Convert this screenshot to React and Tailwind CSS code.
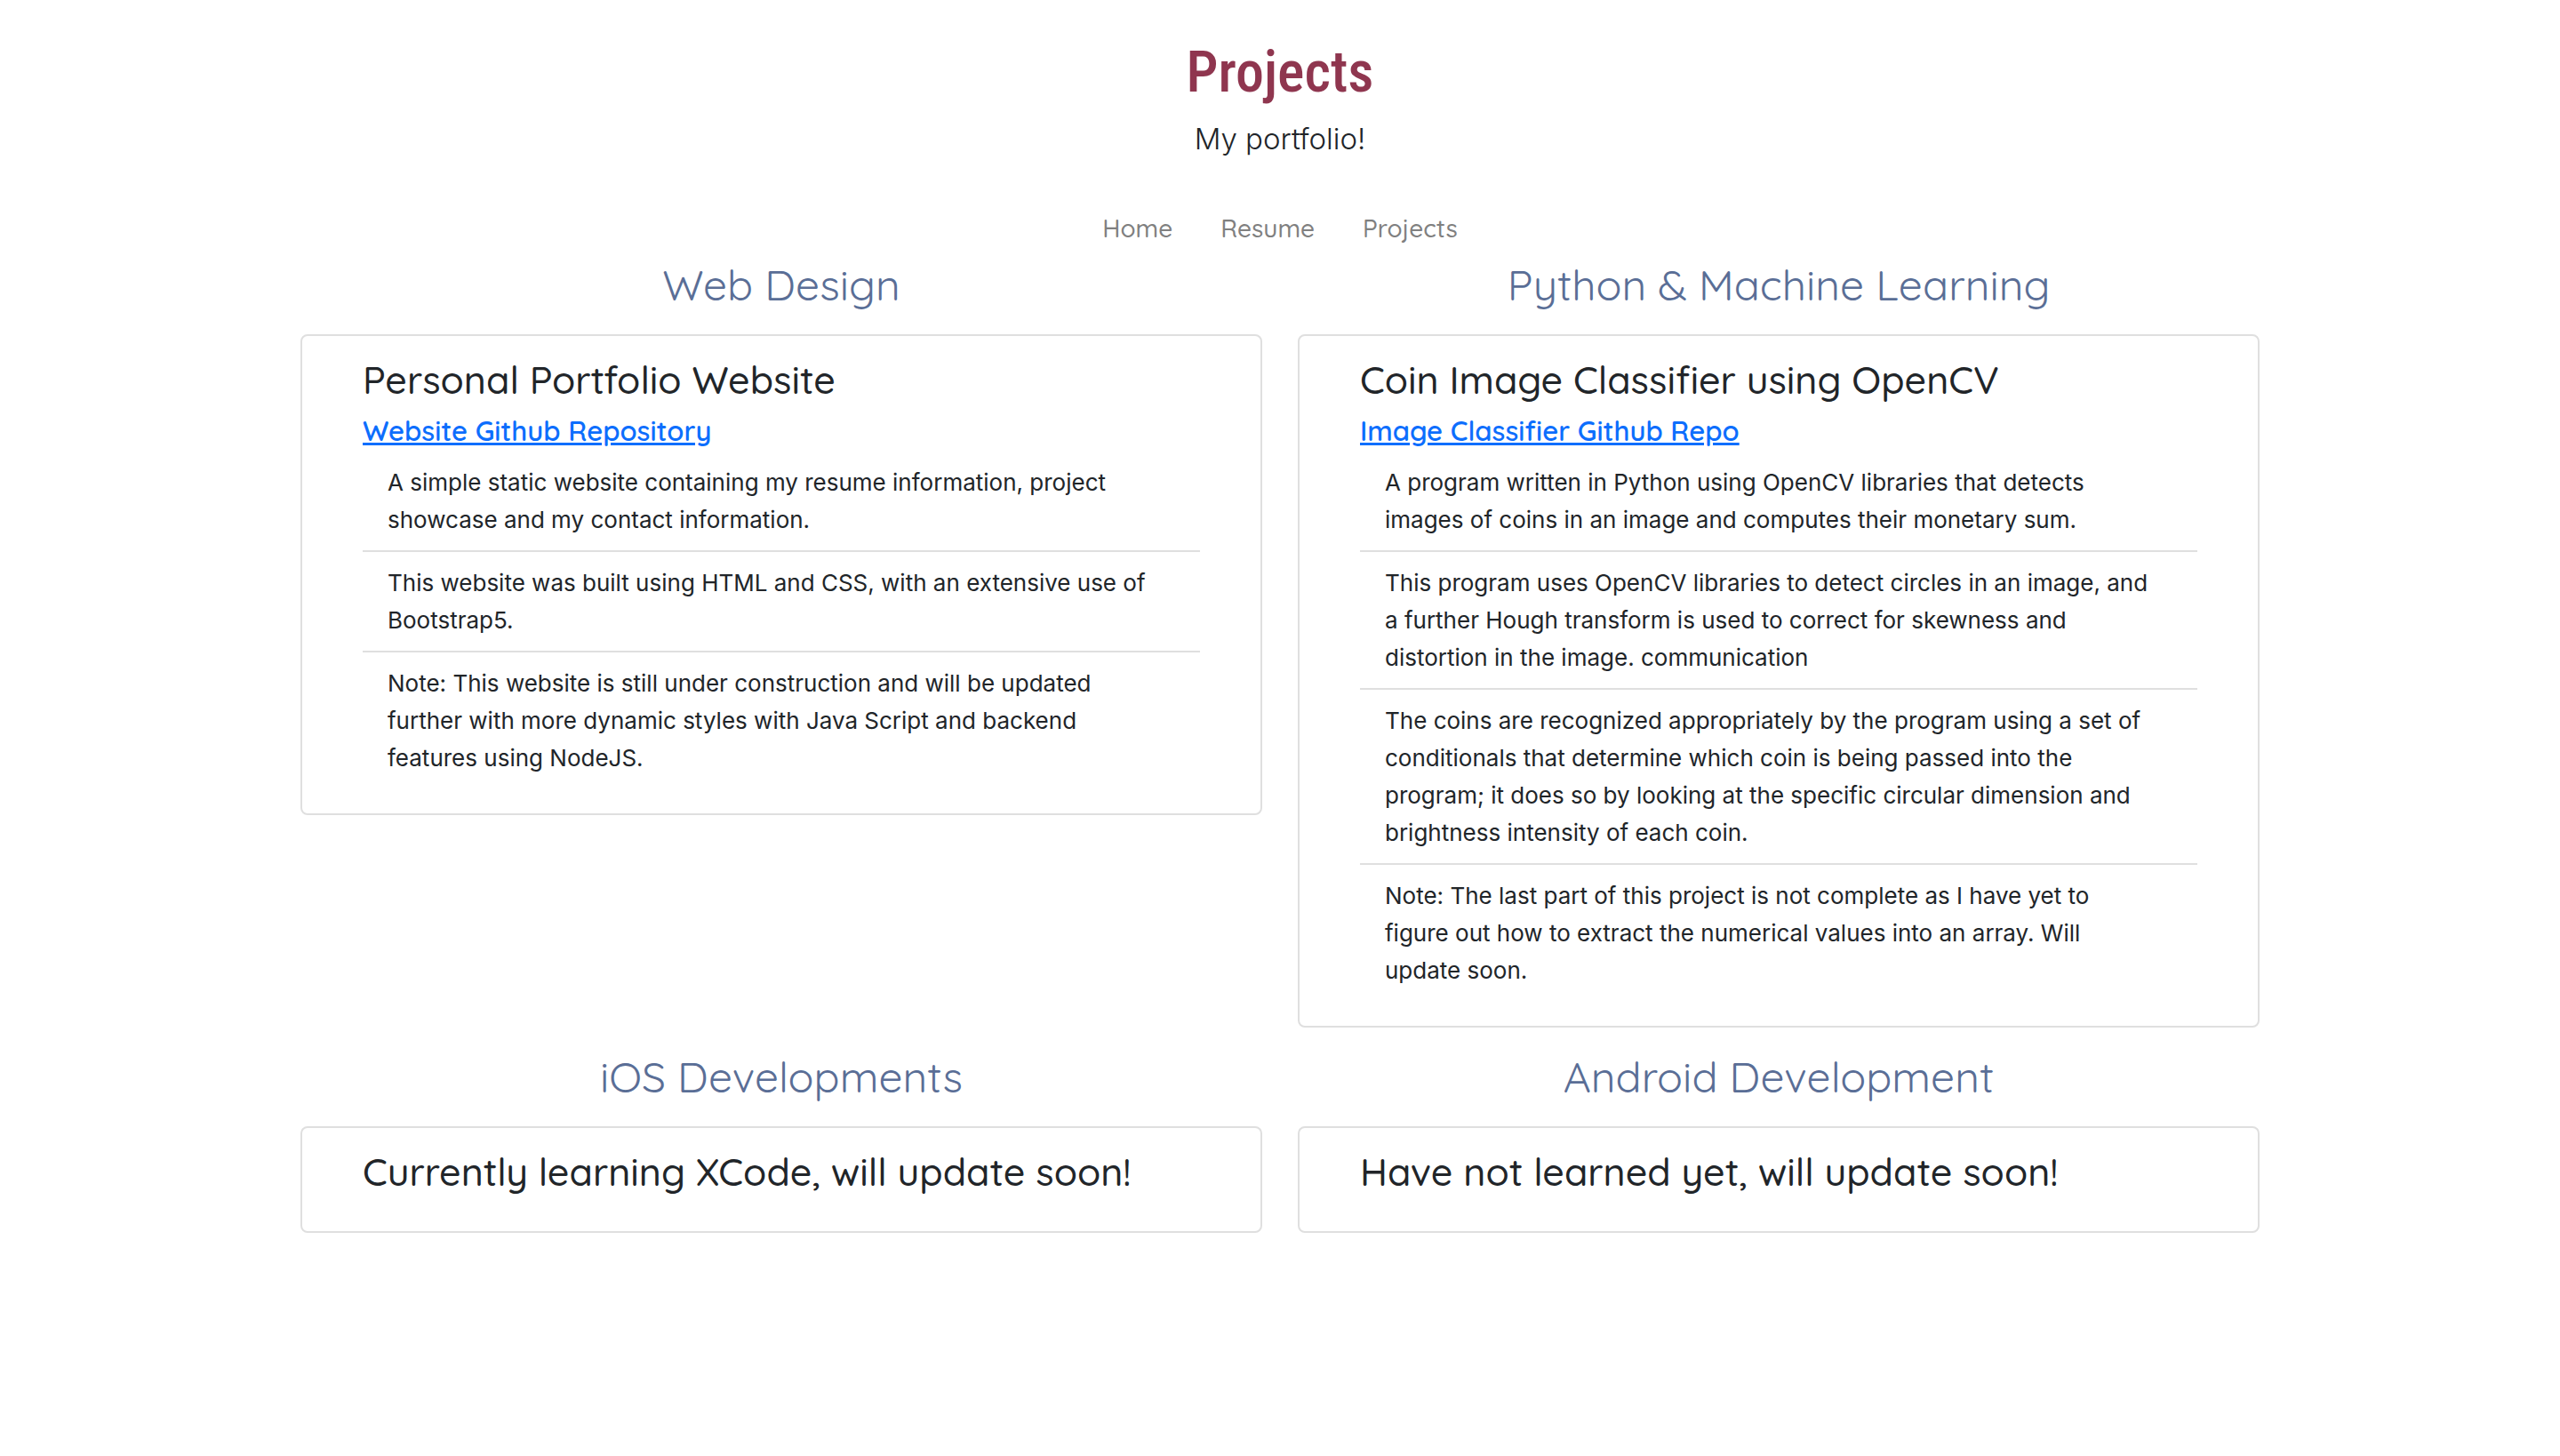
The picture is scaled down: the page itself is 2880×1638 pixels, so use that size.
const rows = [
  [
    {
      heading: "Web Design",
      title: "Personal Portfolio Website",
      link: "Website Github Repository",
      items: [
        "A simple static website containing my resume information, project showcase and my contact information.",
        "This website was built using HTML and CSS, with an extensive use of Bootstrap5.",
        "Note: This website is still under construction and will be updated further with more dynamic styles with Java Script and backend features using NodeJS.",
      ],
    },
    {
      heading: "Python & Machine Learning",
      title: "Coin Image Classifier using OpenCV",
      link: "Image Classifier Github Repo",
      items: [
        "A program written in Python using OpenCV libraries that detects images of coins in an image and computes their monetary sum.",
        "This program uses OpenCV libraries to detect circles in an image, and a further Hough transform is used to correct for skewness and distortion in the image. communication",
        "The coins are recognized appropriately by the program using a set of conditionals that determine which coin is being passed into the program; it does so by looking at the specific circular dimension and brightness intensity of each coin.",
        "Note: The last part of this project is not complete as I have yet to figure out how to extract the numerical values into an array. Will update soon.",
      ],
    },
  ],
  [
    { heading: "iOS Developments", title: "Currently learning XCode, will update soon!" },
    { heading: "Android Development", title: "Have not learned yet, will update soon!" },
  ],
];

function Project({ heading, title, link, items }) {
  return (
    <section>
      <h2 className="text-center font-[Quicksand,Lato,sans-serif] text-[48px] leading-[60px] text-[#5a6e96]">{heading}</h2>
      <div className="mt-[26px] rounded-lg border-2 border-[#dfdfdf] px-[68px] pt-[24px] pb-[28px]">
        <h3 className="mb-[14px] font-[Quicksand,Lato,sans-serif] text-[43px] leading-[50px] font-medium">{title}</h3>
        {link && (
          <a href="#repo" className="block w-fit font-[Quicksand,Lato,sans-serif] text-[31px] leading-[38px] font-semibold text-[#0d6efd] underline">{link}</a>
        )}
        {items && (
          <ul className="mt-1 divide-y-2 divide-[#dfdfdf] font-[Inter,sans-serif] text-[26px] leading-[42px]">
            {items.map((text) => (
              <li key={text} className="pt-[14px] pr-12 pb-[13px] pl-7">{text}</li>
            ))}
          </ul>
        )}
      </div>
    </section>
  );
}

export default function App() {
  return (
    <div className="min-h-screen bg-white font-[Inter,sans-serif] text-[#212529]">
      <header className="pt-[47px] text-center">
        <h1 className="font-['Ubuntu_Condensed','Roboto_Condensed','Open_Sans_Condensed',sans-serif] text-[64px] leading-[70px] font-medium text-[#8f364f]">Projects</h1>
        <p className="mt-3 text-[33px] leading-[54px] font-light">My portfolio!</p>
      </header>
      <nav className="mt-[50px] flex justify-center gap-[54px] font-[Quicksand,Lato,sans-serif] text-[28px] leading-[48px] font-medium text-[#808080]">
        <a href="#home">Home</a>
        <a href="#resume">Resume</a>
        <a href="#projects">Projects</a>
      </nav>
      <main className="mx-auto mt-[9px] w-full max-w-[2204px]">
        {rows.map((row) => (
          <div key={row[0].heading} className="mb-[25px] grid grid-cols-2 gap-10">
            {row.map((p) => (
              <Project key={p.heading} {...p} />
            ))}
          </div>
        ))}
      </main>
    </div>
  );
}
